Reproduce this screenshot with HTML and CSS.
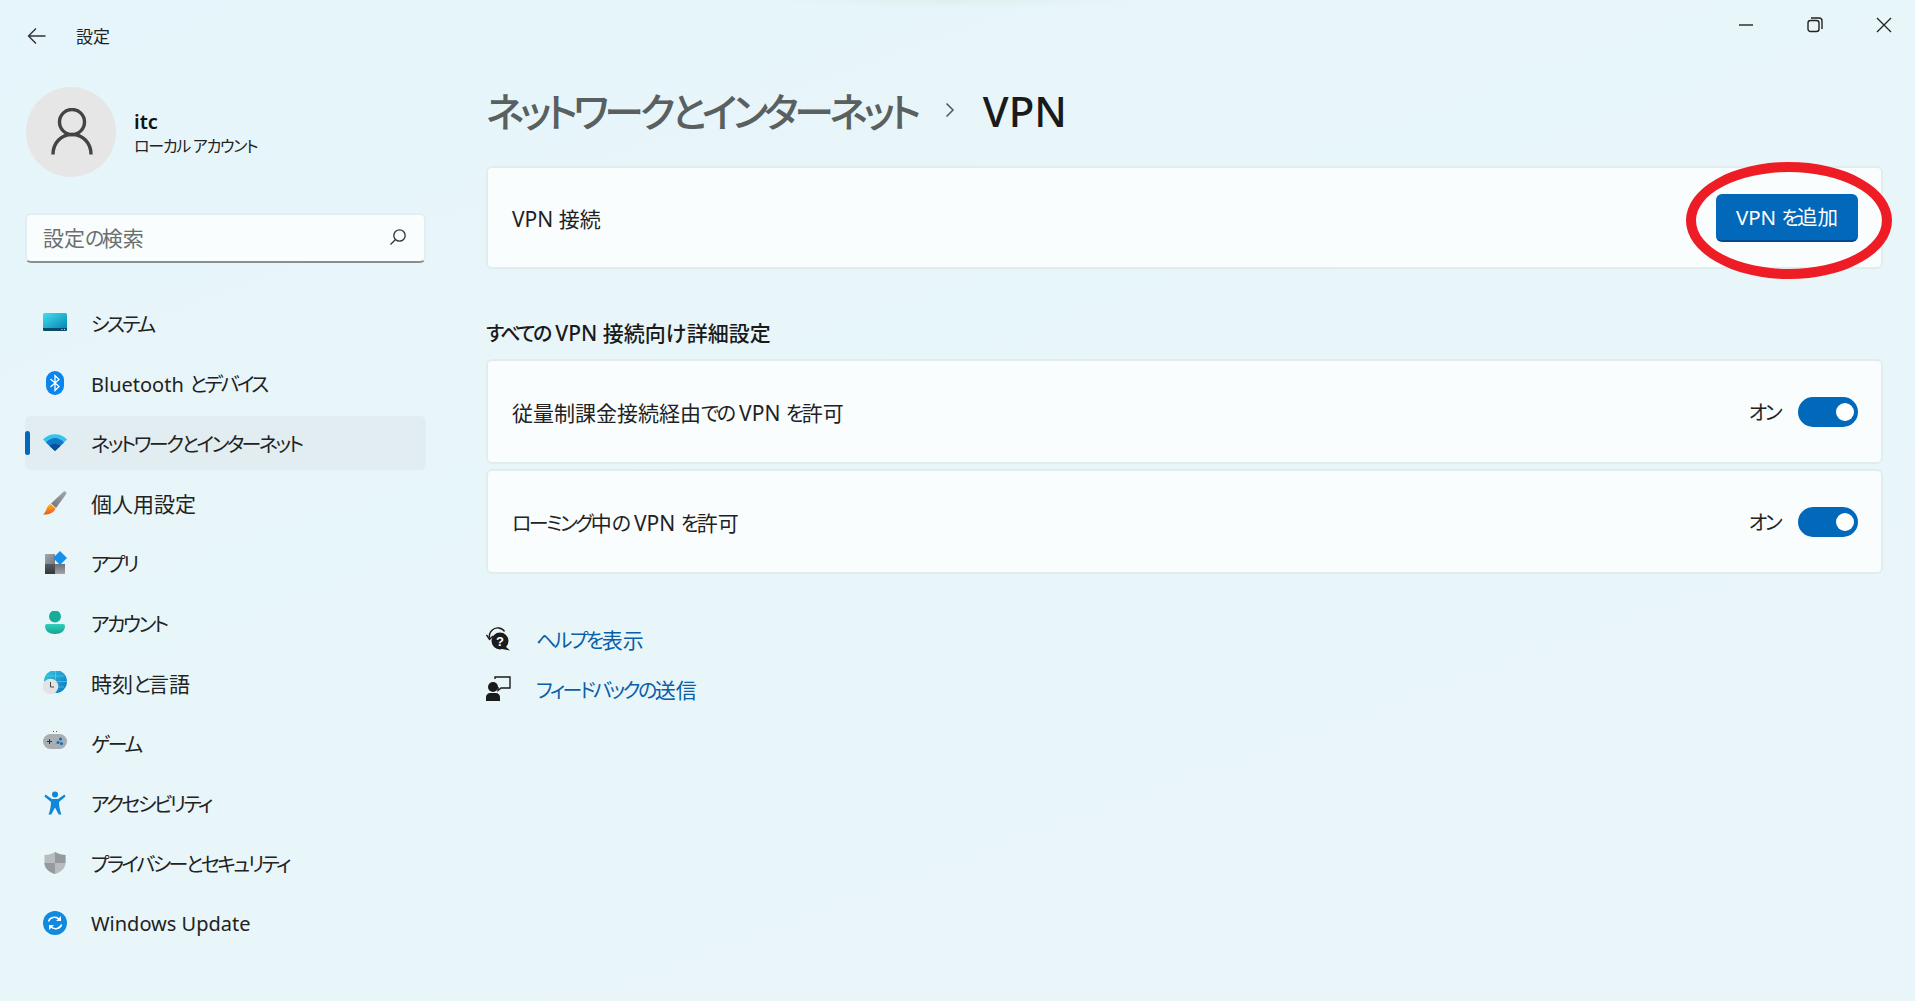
FILE: index.html
```html
<!DOCTYPE html>
<html lang="ja">
<head>
    <meta charset="UTF-8">
    <title>設定</title>
    <link rel="stylesheet" href="styles.css">
</head>
<body>
    <div class="window">
        <!-- Title bar -->
        <div class="titlebar">
            <svg class="back" width="20" height="18" viewBox="0 0 20 18"><path d="M18.5 9H1.5M9 1.5 1.5 9 9 16.5" fill="none" stroke="#333" stroke-width="1.4"/></svg>
            <span class="app-name">設定</span>
            <div class="caption">
                <svg width="16" height="16" viewBox="0 0 16 16"><path d="M1 8h14" stroke="#222" stroke-width="1.4"/></svg>
                <svg width="16" height="16" viewBox="0 0 16 16"><rect x="1" y="3.5" width="11" height="11" rx="2.5" fill="none" stroke="#222" stroke-width="1.4"/><path d="M4 1h8a3 3 0 0 1 3 3v8" fill="none" stroke="#222" stroke-width="1.4"/></svg>
                <svg width="16" height="16" viewBox="0 0 16 16"><path d="M1 1l14 14M15 1 1 15" stroke="#222" stroke-width="1.3"/></svg>
            </div>
        </div>

        <div class="main">
            <!-- Sidebar -->
            <aside class="sidebar">
                <div class="profile">
                    <div class="avatar">
                        <svg width="42" height="48" viewBox="0 0 42 48"><circle cx="21" cy="14" r="12.5" fill="none" stroke="#444" stroke-width="3.4"/><path d="M2 46.5c0-12 8.5-20 19-20s19 8 19 20" fill="none" stroke="#444" stroke-width="3.4"/></svg>
                    </div>
                    <div class="who">
                        <div class="who-name">itc</div>
                        <div class="who-type ka">ローカル アカウント</div>
                    </div>
                </div>

                <div class="search">
                    <span class="search-text"><span>設定</span><span class="ka">の</span><span>検索</span></span>
                    <svg width="18" height="18" viewBox="0 0 18 18"><circle cx="10.5" cy="7.5" r="5.7" fill="none" stroke="#333" stroke-width="1.3"/><path d="M6.5 11.5 1.5 16.5" stroke="#333" stroke-width="1.3"/></svg>
                </div>

                <nav class="nav">
                    <a class="nav-item">
                        <svg class="nav-icon" viewBox="0 0 24 24"><defs><linearGradient id="sys" x1="0" y1="0" x2="1" y2="1"><stop offset="0" stop-color="#3fe0ec"/><stop offset="1" stop-color="#0a86b8"/></linearGradient></defs><path d="M0 3.5A1.5 1.5 0 0 1 1.5 2h21A1.5 1.5 0 0 1 24 3.5V17H0z" fill="url(#sys)"/><path d="M0 17h24v2a1 1 0 0 1-1 1H1a1 1 0 0 1-1-1z" fill="#0b4a68"/><path d="M18.5 18.5h1M21 18.5h1" stroke="#bfe6f2"/></svg>
                        <span class="ka">システム</span>
                    </a>
                    <a class="nav-item">
                        <svg class="nav-icon" viewBox="0 0 24 24"><rect x="3" y="0" width="18" height="24" rx="9" fill="#0a84ee"/><path d="M7.5 8 16 15.5 12 19.5V4.5L16 8.5 7.5 16" fill="none" stroke="#fff" stroke-width="1.3"/></svg>
                        <span><span class="lat">Bluetooth</span> <span class="ka">とデバイス</span></span>
                    </a>
                    <a class="nav-item is-active">
                        <svg class="nav-icon" viewBox="0 0 24 24"><path d="M0 8.5C6.5 1.5 17.5 1.5 24 8.5L12 20z" fill="#35c3ee"/><path d="M3 11.5C8.5 5.5 15.5 5.5 21 11.5L12 20z" fill="#1079c9"/><path d="M6.5 15C10 12 14 12 17.5 15L12 20z" fill="#0b4f96"/></svg>
                        <span class="ka">ネットワークとインターネット</span>
                    </a>
                    <a class="nav-item">
                        <svg class="nav-icon" viewBox="0 0 24 24"><defs><linearGradient id="brush" x1="0" y1="0" x2="0" y2="1"><stop offset="0" stop-color="#ffb02e"/><stop offset="1" stop-color="#ea5a10"/></linearGradient><linearGradient id="handle" x1="0" y1="1" x2="1" y2="0"><stop offset="0" stop-color="#6f7377"/><stop offset="1" stop-color="#a6aaae"/></linearGradient></defs><path d="M20.5 .7c1.3-1.2 3.6.6 2.8 2.3L13 17 8 12.5z" fill="url(#handle)"/><path d="M7.5 13 12.5 17.5C11 22 5 24 0 23.5 3.5 21.5 3 15 7.5 13z" fill="url(#brush)"/></svg>
                        <span>個人用設定</span>
                    </a>
                    <a class="nav-item">
                        <svg class="nav-icon" viewBox="0 0 24 24"><defs><linearGradient id="app1" x1="0" y1="0" x2="1" y2="1"><stop offset="0" stop-color="#a4a8ac"/><stop offset="1" stop-color="#74787c"/></linearGradient><linearGradient id="app2" x1="0" y1="0" x2="0" y2="1"><stop offset="0" stop-color="#575a5f"/><stop offset="1" stop-color="#33363a"/></linearGradient><linearGradient id="app3" x1="0" y1="0" x2="0" y2="1"><stop offset="0" stop-color="#6d7175"/><stop offset="1" stop-color="#a0a4a8"/></linearGradient></defs><rect x="2" y="3" width="10" height="10" fill="url(#app1)"/><rect x="2" y="13" width="10" height="10" fill="url(#app2)"/><rect x="12" y="13" width="10" height="10" fill="url(#app3)"/><path d="M17 0l7 7-7 7-7-7z" fill="#1590ea"/></svg>
                        <span class="ka">アプリ</span>
                    </a>
                    <a class="nav-item">
                        <svg class="nav-icon" viewBox="0 0 24 24"><defs><linearGradient id="acc" x1="0" y1="0" x2="0" y2="1"><stop offset="0" stop-color="#32d0bc"/><stop offset="1" stop-color="#12a292"/></linearGradient></defs><circle cx="12" cy="5.5" r="6" fill="#15ac9c"/><path d="M4 13h16a2 2 0 0 1 2 2c0 5-4 8-10 8S2 20 2 15a2 2 0 0 1 2-2z" fill="url(#acc)"/></svg>
                        <span class="ka">アカウント</span>
                    </a>
                    <a class="nav-item">
                        <svg class="nav-icon" viewBox="0 0 24 24"><defs><linearGradient id="globe" x1="0" y1="0" x2="1" y2="1"><stop offset="0" stop-color="#35c9dc"/><stop offset="1" stop-color="#0a74c4"/></linearGradient></defs><circle cx="12.5" cy="10.5" r="11.5" fill="url(#globe)"/><path d="M1 10.5h23M12.5 -1v23M4 5h17M4 16h17" stroke="#7fdcea" stroke-width=".5" fill="none"/><circle cx="7.5" cy="15.5" r="7.8" fill="#e3e3e3"/><path d="M7.5 11v5h3.5" fill="none" stroke="#444" stroke-width="1"/></svg>
                        <span><span>時刻</span><span class="ka">と</span><span>言語</span></span>
                    </a>
                    <a class="nav-item">
                        <svg class="nav-icon" viewBox="0 0 24 24"><rect x="0" y="3" width="24" height="15" rx="7.5" fill="#a9aeb3"/><path d="M4 10.5h5M6.5 8v5" stroke="#333" stroke-width="1"/><circle cx="17.5" cy="8" r="1.5" fill="#0f6cbd"/><circle cx="15" cy="11.5" r="1.5" fill="#0f6cbd"/><circle cx="18.5" cy="12.5" r="1.5" fill="#0f6cbd"/><path d="M10 .5h1M13 .5h1" stroke="#555"/></svg>
                        <span class="ka">ゲーム</span>
                    </a>
                    <a class="nav-item">
                        <svg class="nav-icon" viewBox="0 0 24 24"><circle cx="12" cy="3.5" r="3" fill="#0f86d8"/><path d="M2.5 3.5 9 8h6l6.5-4.5 1 2L16 11c0 4 1 9 2.5 12.5h-2.8L12 16.5 8.3 23.5H5.5C7 20 8 15 8 11L1.5 5.5z" fill="#0f86d8"/></svg>
                        <span class="ka">アクセシビリティ</span>
                    </a>
                    <a class="nav-item">
                        <svg class="nav-icon" viewBox="0 0 24 24"><path d="M12 1c3 2 7 3 10.5 3v8c0 5.5-4.5 9-10.5 11C6 21 1.5 17.5 1.5 12V4C5 4 9 3 12 1z" fill="#b8bcc0"/><path d="M12 1c3 2 7 3 10.5 3v8H12zM12 12H1.5c0 5.5 4.5 9 10.5 11z" fill="#959a9e"/></svg>
                        <span class="ka">プライバシーとセキュリティ</span>
                    </a>
                    <a class="nav-item nav-update">
                        <svg class="nav-icon" viewBox="0 0 24 24"><circle cx="12" cy="12" r="12" fill="#0f8ade"/><path d="M5.5 10.5C6.5 6.5 12.5 4.5 16.5 8.5M18.5 13.5C17.5 17.5 11.5 19.5 7.5 15.5" fill="none" stroke="#fff" stroke-width="1.5"/><path d="M18 5v5h-5zM6 19v-5h5z" fill="#fff"/></svg>
                        <span class="lat">Windows Update</span>
                    </a>
                </nav>
            </aside>

            <!-- Content -->
            <main class="content">
                <h1 class="crumbs">
                    <span class="crumb-parent ka">ネットワークとインターネット</span>
                    <svg class="crumb-sep" width="10" height="16" viewBox="0 0 10 16"><path d="M1.5 1.5 8 8l-6.5 6.5" fill="none" stroke="#555" stroke-width="1.5"/></svg>
                    <span class="crumb-current">VPN</span>
                </h1>

                <div class="card card-connect">
                    <span>VPN 接続</span>
                    <button class="add-btn">VPN <span class="ka">を</span>追加</button>
                </div>

                <h2 class="section-title"><span class="ka">すべての</span> VPN 接続向け詳細設定</h2>

                <div class="card card-setting">
                    <span>従量制課金接続経由<span class="ka">での</span> VPN <span class="ka">を</span>許可</span>
                    <div class="toggle-wrap"><span class="ka">オン</span><span class="toggle"></span></div>
                </div>
                <div class="card card-setting">
                    <span><span class="ka">ローミング</span>中<span class="ka">の</span> VPN <span class="ka">を</span>許可</span>
                    <div class="toggle-wrap"><span class="ka">オン</span><span class="toggle"></span></div>
                </div>

                <div class="links">
                    <div class="link-row">
                        <svg width="26" height="26" viewBox="0 0 26 26"><circle cx="14" cy="15" r="8.5" fill="#1b1b1b"/><path d="M19 20l5 4.5-8-1.5z" fill="#1b1b1b"/><path d="M3.5 12C2.5 5.5 8 1 13 2c2.5.5 4.5 1.5 5.5 3.5" fill="none" stroke="#1b1b1b" stroke-width="1.4"/><path d="M.5 9 3.5 13.5 7 10" fill="none" stroke="#1b1b1b" stroke-width="1.4"/><text x="14" y="19.5" class="help-mark">?</text></svg>
                        <a class="link"><span class="ka">ヘルプを</span>表示</a>
                    </div>
                    <div class="link-row">
                        <svg width="26" height="26" viewBox="0 0 26 26"><circle cx="7" cy="11" r="5" fill="#1b1b1b"/><path d="M0 25v-4c0-2 2-4 4-4h6c2 0 4 2 4 4v4z" fill="#1b1b1b"/><path d="M9 3V1h15v11H15l-3 2.5V11" fill="none" stroke="#1b1b1b" stroke-width="1.4"/></svg>
                        <a class="link"><span class="ka">フィードバックの</span>送信</a>
                    </div>
                </div>
            </main>
        </div>

        <!-- red annotation ring round the add button -->
        <div class="ring"></div>
    </div>
</body>
</html>
```

FILE: styles.css
```css
* {
    box-sizing: border-box;
}
html, body {
    margin: 0;
    height: 100%;
}
body {
    font-family: "Noto Sans", "Noto Sans CJK JP", sans-serif;
    color: #1f1f1f;
    overflow: hidden;
}
.window {
    position: relative;
    height: 1001px;
    background:
        radial-gradient(ellipse 190px 9px at 950px 0, #dfefee, transparent),
        linear-gradient(160deg, #e6f5fb 0%, #e8f6f9 45%, #eaf5f9 100%);
}
/* kana is set tighter than the Noto default */
.ka {
    font-size: .95em;
    font-feature-settings: "palt";
    letter-spacing: -.125em;
}
.lat {
    font-size: 20px;
}

/* Title bar */
.titlebar {
    display: flex;
    align-items: center;
    height: 72px;
    padding-left: 27px;
}
.back {
    margin-right: 29px;
}
.app-name {
    margin-bottom: 2px;
    font-size: 17px;
    color: #222;
}
.caption {
    display: flex;
    align-items: center;
    gap: 53px;
    margin-left: auto;
    margin-right: 23px;
    margin-bottom: 22px;
}

.main {
    display: flex;
}

/* Sidebar */
.sidebar {
    width: 486px;
    padding-left: 25px;
    flex-shrink: 0;
}
.profile {
    display: flex;
    align-items: center;
    gap: 18px;
    height: 90px;
    margin: 15px 0 0 1px;
}
.avatar {
    display: flex;
    align-items: center;
    justify-content: center;
    width: 90px;
    height: 90px;
    padding-left: 2px;
    border-radius: 50%;
    background: #e6e6e6;
}
.who {
    margin-top: 3px;
}
.who-name {
    font-size: 20px;
    font-weight: 600;
    line-height: 24px;
    color: #111;
}
.who-type {
    font-size: 16px;
    letter-spacing: -.08em;
    line-height: 24px;
    color: #222;
}
.search {
    display: flex;
    align-items: center;
    justify-content: space-between;
    width: 401px;
    height: 50px;
    margin-top: 36px;
    padding: 0 17px 2px 16px;
    background: #f9fdfe;
    border: 2px solid #e2eef1;
    border-bottom: 2px solid #86908f;
    border-radius: 6px;
}
.search-text {
    font-size: 21px;
    color: #6b6f70;
}
.nav {
    display: flex;
    flex-direction: column;
    gap: 6px;
    width: 401px;
    margin-top: 33px;
}
.nav-item {
    position: relative;
    display: flex;
    align-items: center;
    gap: 24px;
    height: 54px;
    padding-left: 18px;
    font-size: 21px;
    color: #222;
    border-radius: 6px;
}
.nav-item.is-active {
    background: #e1edf0;
}
.nav-item.is-active::before {
    content: "";
    position: absolute;
    left: 0;
    top: 15px;
    width: 5px;
    height: 24px;
    border-radius: 3px;
    background: #0268b9;
}
.nav-icon {
    width: 24px;
    height: 24px;
    flex-shrink: 0;
}

/* Content */
.content {
    flex: 1;
    padding-right: 32px;
}
.crumbs {
    display: flex;
    align-items: center;
    height: 60px;
    margin: 8px 0 26px;
    font-size: 42px;
    font-weight: 500;
}
.crumb-parent {
    color: #5a5f60;
    letter-spacing: -.108em;
}
.crumb-sep {
    margin: 0 28px 0 28px;
}
.crumb-current {
    color: #1a1a1a;
}
.card {
    display: flex;
    align-items: center;
    justify-content: space-between;
    padding: 0 23px 0 24px;
    font-size: 21px;
    color: #222;
    background: #f9fdfe;
    border: 2px solid #e1ecef;
    border-radius: 6px;
}
.card-connect {
    height: 103px;
}
.card-setting {
    height: 105px;
    margin-bottom: 5px;
}
.add-btn {
    width: 142px;
    height: 48px;
    padding-bottom: 3px;
    font-family: inherit;
    font-size: 20.5px;
    color: #fff;
    background: #0268b9;
    border: 0;
    border-bottom: 2px solid #004a8a;
    border-radius: 6px;
}
.section-title {
    margin: 49px 0 10px;
    font-size: 21px;
    font-weight: 500;
    line-height: 30px;
    color: #1a1a1a;
}
.toggle-wrap {
    display: flex;
    align-items: center;
    gap: 18px;
}
.toggle {
    position: relative;
    width: 60px;
    height: 30px;
    border-radius: 15px;
    background: #0268b9;
}
.toggle::after {
    content: "";
    position: absolute;
    right: 4px;
    top: 6px;
    width: 18px;
    height: 18px;
    border-radius: 50%;
    background: #fff;
}

/* Help links */
.links {
    display: flex;
    flex-direction: column;
    gap: 24px;
    margin-top: 52px;
}
.link-row {
    display: flex;
    align-items: center;
    gap: 24px;
    height: 26px;
}
.link {
    font-size: 21px;
    color: #0a5ea8;
}
.help-mark {
    font-family: "Liberation Sans", sans-serif;
    font-size: 13px;
    font-weight: 700;
    fill: #fff;
    text-anchor: middle;
}

/* Annotation */
.ring {
    position: absolute;
    left: 1686px;
    top: 162px;
    width: 206px;
    height: 117px;
    border: 10px solid #ee1c25;
    border-radius: 50%;
}
```
